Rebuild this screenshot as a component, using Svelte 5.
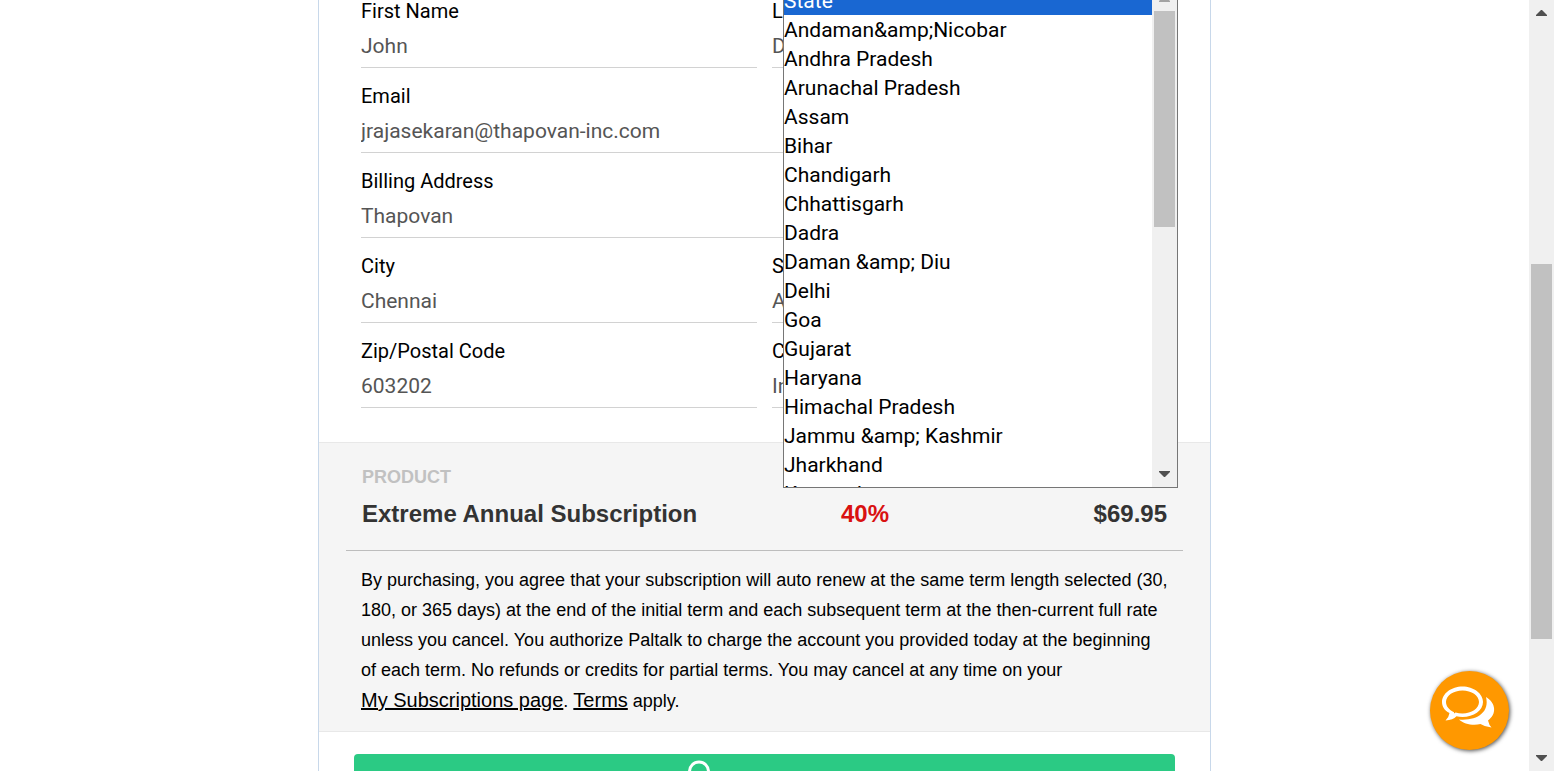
<script>
  const states = [
    'State', 'Andaman&amp;Nicobar', 'Andhra Pradesh', 'Arunachal Pradesh', 'Assam', 'Bihar',
    'Chandigarh', 'Chhattisgarh', 'Dadra', 'Daman &amp; Diu', 'Delhi', 'Goa', 'Gujarat',
    'Haryana', 'Himachal Pradesh', 'Jammu &amp; Kashmir', 'Jharkhand', 'Karnataka',
  ];
</script>

{#snippet arrow(up)}
  <svg class="arrow" class:up viewBox="0 0 11 6" width="11" height="6" aria-hidden="true">
    <path d="M0 0H11V1L6 6H5L0 1Z" fill="currentColor" />
  </svg>
{/snippet}

<div class="page">
  <main>
    <div class="card">
      <form class="fields">
        <div class="field">
          <label for="first">First Name</label>
          <input id="first" value="John" />
        </div>
        <div class="field">
          <label for="last">Last Name</label>
          <input id="last" value="Doe" />
        </div>
        <div class="field wide">
          <label for="email">Email</label>
          <input id="email" value="jrajasekaran@thapovan-inc.com" />
        </div>
        <div class="field wide">
          <label for="address">Billing Address</label>
          <input id="address" value="Thapovan" />
        </div>
        <div class="field">
          <label for="city">City</label>
          <input id="city" value="Chennai" />
        </div>
        <div class="field">
          <label for="state">State</label>
          <select id="state"><option>Andhra Pradesh</option></select>
          <div class="popup">
            <select class="list" size="17" aria-label="State">
              {#each states as name, i}
                <option selected={i === 0}>{name}</option>
              {/each}
            </select>
            <div class="bar">
              <span class="end dim">{@render arrow(true)}</span>
              <span class="track"><span class="thumb"></span></span>
              <span class="end last">{@render arrow(false)}</span>
            </div>
          </div>
        </div>
        <div class="field">
          <label for="zip">Zip/Postal Code</label>
          <input id="zip" value="603202" />
        </div>
        <div class="field">
          <label for="country">Country</label>
          <select id="country"><option>India</option></select>
        </div>
      </form>

      <section class="order">
        <div class="product">
          <h2>PRODUCT</h2>
          <div class="line">
            <strong>Extreme Annual Subscription</strong>
            <strong class="off">40%</strong>
            <strong class="price">$69.95</strong>
          </div>
        </div>
        <p>
          By purchasing, you agree that your subscription will auto renew at the same term length selected (30, 180, or 365 days) at the end of the initial term and each subsequent term at the then-current full rate unless you cancel. You authorize Paltalk to charge the account you provided today at the beginning of each term. No refunds or credits for partial terms. You may cancel at any time on your <a class="keep" href="#subscriptions">My Subscriptions page</a>. <a href="#terms">Terms</a> apply.
        </p>
      </section>

      <button class="buy" type="button" aria-label="Secure checkout">
        <svg viewBox="0 0 24 32" width="24" height="32" aria-hidden="true">
          <path d="M2.500 20V11.500a9.500 9.500 0 0 1 19 0V20" fill="none" stroke="#fff" stroke-width="3" />
          <rect x="1" y="17" width="22" height="14" rx="2" fill="#fff" />
        </svg>
      </button>
    </div>
  </main>

  <button class="chat" type="button" aria-label="Chat">
    <svg viewBox="0 0 80 80" width="80" height="80" aria-hidden="true">
      <path d="M56 26C66 32 67 43 58 49.500Q59 54 61.500 56.500Q55 56 50.500 53C43 55 34 53 29 48.500C46 50 60 42 56 26Z" fill="#fff" />
      <path d="M32.500 15.500C43.500 15.500 53 22.500 53 31S43.500 46 32.500 46Q29 46 26.500 45.300Q23 49 15.500 49.500Q19 46 19.500 42C14 39.500 12 35 12 31C12 22.500 21.500 15.500 32.500 15.500Z" fill="#fff" />
      <path d="M32.500 19.500C41.500 19.500 49 24.500 49 31S41.500 42.500 32.500 42.500Q29 42.500 25.500 41.500L24 42.500V41.200C19 39 16 35 16 31C16 24.500 23.500 19.500 32.500 19.500Z" fill="#ff9800" />
    </svg>
  </button>

  <div class="bar">
    <span class="end">{@render arrow(true)}</span>
    <span class="track"><span class="thumb main-thumb"></span></span>
    <span class="end last">{@render arrow(false)}</span>
  </div>
</div>

<style>
  :global(body) {
    background: #fff;
    overflow: hidden;
  }
  .page {
    display: flex;
    height: 100vh;
    overflow: hidden;
    position: relative;
    color: #000;
    font-family: "Liberation Sans", Arial, sans-serif;
  }
  * {
    box-sizing: border-box;
  }
  main {
    flex: 1;
    min-width: 0;
    overflow: hidden;
  }
  .card {
    max-width: 893px;
    min-height: 100vh;
    margin: 0 auto;
    border: solid #c8d8ea;
    border-width: 0 1px;
  }
  .fields {
    display: grid;
    grid-template-columns: 1fr 1fr;
    column-gap: 15px;
    row-gap: 18px;
    padding: 1px 42px 34px;
    font-family: Roboto, sans-serif;
  }
  .field {
    position: relative;
    min-width: 0;
    height: 67px;
  }
  .wide {
    grid-column: 1 / -1;
  }
  .field label {
    display: block;
    height: 22px;
    line-height: 20px;
    font-size: 20px;
  }
  .field input,
  .field > select {
    display: block;
    appearance: none;
    width: 100%;
    height: 45px;
    margin: 0;
    padding: 2px 0 0;
    border: 0;
    border-bottom: 1px solid #d2d2d2;
    border-radius: 0;
    background: none;
    color: #555;
    font: 21px Roboto, sans-serif;
    outline: 0;
  }
  .popup {
    position: absolute;
    z-index: 2;
    left: 11px;
    right: -10px;
    bottom: -165px;
    height: 503px;
    display: flex;
    border: 1px solid #767676;
    background: #fff;
  }
  .list {
    flex: 1;
    min-width: 0;
    height: 501px;
    margin: 0;
    padding: 0;
    border: 0;
    border-radius: 0;
    outline: 0;
    background: #fff;
    color: #000;
    font: 21px Roboto, sans-serif;
    scrollbar-width: none;
  }
  .list option {
    height: 29px;
    min-height: 29px;
    padding: 3px 0 0;
  }
  .list option:checked {
    background: linear-gradient(#1967d2, #1967d2);
    -webkit-text-fill-color: #fff;
  }
  .bar {
    display: flex;
    flex-direction: column;
    width: 25px;
    flex: none;
    background: #f0f0f0;
    color: #505050;
  }
  .end {
    display: flex;
    align-items: center;
    justify-content: center;
    height: 25px;
  }
  .last {
    padding-bottom: 2px;
  }
  .dim {
    color: #a3a3a3;
  }
  .up {
    transform: rotate(180deg);
  }
  .track {
    flex: 1;
    padding: 0 2px;
  }
  .thumb {
    display: block;
    height: 48%;
    background: #c1c1c1;
  }
  .main-thumb {
    height: 52%;
    margin-top: 239px;
  }
  .order {
    background: #f5f5f5;
    border: solid #e8e8e8;
    border-width: 1px 0;
    padding: 0 27px 15px;
  }
  .product {
    padding: 24px 16px 21px;
    border-bottom: 1px solid #bdbdbd;
  }
  h2 {
    margin: 0;
    font-size: 18px;
    line-height: 20px;
    color: #c1c1c1;
  }
  .line {
    display: grid;
    grid-template-columns: 1fr 200px 126px;
    margin-top: 12px;
    font-size: 24px;
    line-height: 30px;
    color: #333;
  }
  .line .off {
    color: #d91111;
  }
  .price {
    text-align: right;
  }
  p {
    margin: 0;
    padding: 14px 14px 0 15px;
    font-size: 18px;
    line-height: 30px;
  }
  p a {
    color: #000;
    font-size: 20px;
  }
  .keep {
    white-space: nowrap;
  }
  .buy {
    display: flex;
    justify-content: center;
    width: calc(100% - 70px);
    height: 68px;
    margin: 22px 35px 0;
    padding: 6px 132px 0 0;
    border: 0;
    border-radius: 4px;
    background: #2bca84;
  }
  .chat {
    position: absolute;
    right: 45px;
    bottom: 21px;
    width: 79px;
    height: 79px;
    padding: 0;
    border: 0;
    border-radius: 50%;
    background: #ff9800;
    box-shadow: 1px 1px 4px rgba(0, 0, 0, 0.7);
  }
</style>
